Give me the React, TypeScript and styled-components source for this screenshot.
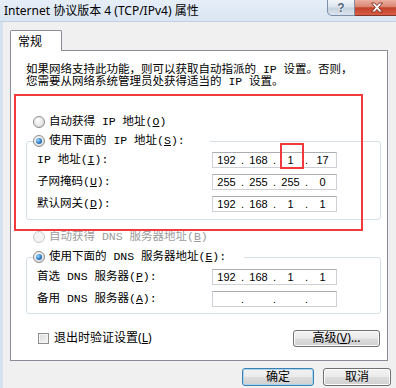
import React from "react";
import styled, { createGlobalStyle } from "styled-components";

const GlobalStyle = createGlobalStyle`
  html, body {
    margin: 0;
    padding: 0;
    background: #f0f0f0;
  }
  body {
    font-family: "Noto Sans", "Noto Sans CJK SC", sans-serif;
    color: #000;
  }
`;

const SIMSUN = `"Liberation Mono", "Noto Sans CJK SC", monospace`;
const YAHEI = `"Noto Sans", "Noto Sans CJK SC", sans-serif`;

const Window = styled.div`
  width: 396px;
  height: 388px;
  overflow: hidden;
  display: flex;
  flex-direction: column;
  background: #f0f0f0;
`;

const TitleBar = styled.div`
  height: 22px;
  flex: none;
  display: flex;
  align-items: flex-start;
  box-sizing: border-box;
  background: linear-gradient(#e6eef8, #d9e5f2);
  border-bottom: 1px solid #c3d1e2;
`;

const Title = styled.div`
  flex: 1;
  min-width: 0;
  padding-left: 4px;
  font: 12px/22px ${YAHEI};
  white-space: nowrap;
`;

const CaptionButtons = styled.div`
  display: flex;
  flex: none;
  margin-right: -4px;
`;

const HelpButton = styled.div`
  width: 28px;
  height: 16px;
  box-sizing: border-box;
  border: 1px solid #7d8fa6;
  border-top: none;
  border-radius: 0 0 0 5px;
  background: linear-gradient(#f1f5fa, #dae3ed 48%, #c6d2e0 52%, #dbe4ee);
  display: flex;
  align-items: center;
  justify-content: center;
  font: bold 12px/1 "Liberation Sans", sans-serif;
  color: #55687f;
  text-shadow: 0 0 2px #fff;
`;

const CloseButton = styled.div`
  width: 45px;
  height: 16px;
  box-sizing: border-box;
  border: 1px solid #80362a;
  border-top: none;
  border-left: none;
  background: linear-gradient(#eab0a2, #d98670 45%, #c3422c 52%, #d85d44);
  display: flex;
  align-items: center;
  justify-content: center;
`;

const Body = styled.div`
  flex: 1;
  display: flex;
  flex-direction: column;
  border-left: 3px solid #d5e1ef;
  padding: 8px 0 0 7px;
`;

const TabStrip = styled.div`
  display: flex;
`;

const Tab = styled.div`
  position: relative;
  z-index: 1;
  width: 52px;
  height: 21px;
  box-sizing: border-box;
  margin-bottom: -1px;
  padding-left: 7px;
  border: 1px solid #898c95;
  border-bottom: none;
  border-radius: 2px 2px 0 0;
  background: #fff;
  font: 12px/21px ${YAHEI};
`;

const Panel = styled.div`
  position: relative;
  width: 378px;
  height: 311px;
  box-sizing: border-box;
  border: 1px solid #898c95;
  background: #fff;
  padding: 13px 7px 0 15px;
  display: flex;
  flex-direction: column;
`;

const Intro = styled.p`
  margin: 0;
  font: 11.5px/12px ${SIMSUN};
  white-space: nowrap;
`;

const OptionRow = styled.div<{ $top: number }>`
  display: flex;
  align-items: center;
  gap: 4px;
  height: 16px;
  margin: ${(p) => p.$top}px 0 0 7px;
`;

const Radio = styled.span<{ $checked?: boolean; $disabled?: boolean }>`
  width: 12px;
  height: 12px;
  flex: none;
  box-sizing: border-box;
  border-radius: 50%;
  border: 1px solid ${(p) => (p.$disabled ? "#c9c9c9" : "#8b8b8b")};
  background: ${(p) =>
    p.$disabled
      ? "#f4f4f4"
      : "radial-gradient(circle at 40% 35%, #ffffff, #e4e4e4 60%, #cfcfcf)"};
  display: flex;
  align-items: center;
  justify-content: center;

  &::after {
    content: "";
    display: ${(p) => (p.$checked ? "block" : "none")};
    width: 6px;
    height: 6px;
    border-radius: 50%;
    background: radial-gradient(circle at 35% 35%, #9bd9ff, #2d7bc4 55%, #154e8c);
  }
`;

const OptionText = styled.span<{ $disabled?: boolean }>`
  font: 11.5px/16px ${SIMSUN};
  white-space: nowrap;
  color: ${(p) => (p.$disabled ? "#9c9c9c" : "#000")};
`;

const GroupBox = styled.fieldset<{ $top: number; $bottom: number }>`
  margin: ${(p) => p.$top}px 0 0 0;
  width: 355px;
  min-inline-size: 0;
  box-sizing: border-box;
  border: 1px solid #d5dfe5;
  border-radius: 3px;
  padding: 0 43px ${(p) => p.$bottom}px 6px;
`;

const GroupLegend = styled.legend<{ $gap: number }>`
  padding: 0 ${(p) => p.$gap}px 0 0;
  height: 16px;
  display: flex;
  align-items: center;
  gap: 4px;
`;

const FieldRow = styled.div<{ $first?: boolean }>`
  display: flex;
  align-items: center;
  justify-content: space-between;
  height: 22px;
  padding-left: 4px;
`;

const FieldLabel = styled.span`
  font: 11.5px/16px ${SIMSUN};
  white-space: nowrap;
`;

const IpBox = styled.div`
  width: 125px;
  height: 16px;
  box-sizing: border-box;
  border: 1px solid #cdd1d7;
  border-top-color: #abadb3;
  background: #fff;
  display: grid;
  grid-template-columns: 1fr 5px 1fr 5px 1fr 5px 1fr;
  align-items: center;
  font: 11px/14px "Liberation Sans", sans-serif;
`;

const Octet = styled.span`
  text-align: center;
`;

const Dot = styled.span`
  text-align: center;
`;

const BottomRow = styled.div`
  display: flex;
  align-items: center;
  justify-content: space-between;
  height: 18px;
  margin-top: 15px;
`;

const CheckOption = styled.label`
  display: flex;
  align-items: center;
  gap: 5px;
  margin-left: 12px;
`;

const CheckBox = styled.span`
  width: 11px;
  height: 11px;
  box-sizing: border-box;
  border: 1px solid #8f8f8f;
  background: linear-gradient(135deg, #dcdcdc, #f6f6f6);
  box-shadow: inset 0 0 0 1px #f4f4f4;
`;

const CheckText = styled.span`
  font: 12px/16px ${YAHEI};
  white-space: nowrap;
`;

const PushButton = styled.button<{ $width: number; $default?: boolean }>`
  width: ${(p) => p.$width}px;
  height: ${(p) => (p.$default !== undefined ? 18 : 17)}px;
  box-sizing: border-box;
  padding: 0;
  border: 1px solid ${(p) => (p.$default ? "#3c7fb1" : "#707070")};
  border-radius: 3px;
  background: linear-gradient(#f2f2f2, #ebebeb 48%, #dddddd 52%, #cfcfcf);
  box-shadow: inset 0 0 0 1px ${(p) => (p.$default ? "#a6d6f2" : "#fcfcfc")};
  font: 12px/14px ${YAHEI};
  color: #000;
`;

const Footer = styled.div`
  display: flex;
  justify-content: flex-end;
  gap: 9px;
  margin-top: 7px;
  padding-right: 5px;
`;

const Highlight = styled.div<{ $w: number }>`
  position: absolute;
  box-sizing: border-box;
  border: ${(p) => p.$w}px solid #f2393b;
  pointer-events: none;
`;

const Key = ({ k }: { k: string }) => (
  <>
    (<u>{k}</u>)
  </>
);

const IpField = ({ parts }: { parts: string[] }) => (
  <IpBox>
    {parts.map((part, i) => (
      <React.Fragment key={i}>
        {i > 0 && <Dot>.</Dot>}
        <Octet>{part}</Octet>
      </React.Fragment>
    ))}
  </IpBox>
);

const CloseGlyph = () => (
  <svg width="14" height="11" viewBox="0 0 14 11">
    <path
      d="M1.5 1h3.2L7 3.6 9.3 1h3.2L8.7 5.5l3.8 4.5H9.3L7 7.4 4.7 10H1.5l3.8-4.5z"
      fill="#fff"
      stroke="#7a2a1e"
      strokeWidth="0.9"
      strokeLinejoin="round"
    />
  </svg>
);

const App = () => {
  return (
    <Window>
      <GlobalStyle />
      <TitleBar>
        <Title>Internet 协议版本 4 (TCP/IPv4) 属性</Title>
        <CaptionButtons>
          <HelpButton>?</HelpButton>
          <CloseButton>
            <CloseGlyph />
          </CloseButton>
        </CaptionButtons>
      </TitleBar>
      <Body>
        <TabStrip>
          <Tab>常规</Tab>
        </TabStrip>
        <Panel>
          <Intro>
            如果网络支持此功能，则可以获取自动指派的 IP 设置。否则，
            <br />
            您需要从网络系统管理员处获得适当的 IP 设置。
          </Intro>

          <OptionRow $top={26}>
            <Radio />
            <OptionText>
              自动获得 IP 地址<Key k="O" />
            </OptionText>
          </OptionRow>

          <GroupBox $top={3} $bottom={4}>
            <GroupLegend $gap={25}>
              <Radio $checked />
              <OptionText>
                使用下面的 IP 地址<Key k="S" />:
              </OptionText>
            </GroupLegend>
            <FieldRow>
              <FieldLabel>
                IP 地址<Key k="I" />:
              </FieldLabel>
              <IpField parts={["192", "168", "1", "17"]} />
            </FieldRow>
            <FieldRow>
              <FieldLabel>
                子网掩码<Key k="U" />:
              </FieldLabel>
              <IpField parts={["255", "255", "255", "0"]} />
            </FieldRow>
            <FieldRow>
              <FieldLabel>
                默认网关<Key k="D" />:
              </FieldLabel>
              <IpField parts={["192", "168", "1", "1"]} />
            </FieldRow>
          </GroupBox>

          <OptionRow $top={9}>
            <Radio $disabled />
            <OptionText $disabled>
              自动获得 DNS 服务器地址<Key k="B" />
            </OptionText>
          </OptionRow>

          <GroupBox $top={4} $bottom={3}>
            <GroupLegend $gap={18}>
              <Radio $checked />
              <OptionText>
                使用下面的 DNS 服务器地址<Key k="E" />:
              </OptionText>
            </GroupLegend>
            <FieldRow style={{ marginTop: 1 }}>
              <FieldLabel>
                首选 DNS 服务器<Key k="P" />:
              </FieldLabel>
              <IpField parts={["192", "168", "1", "1"]} />
            </FieldRow>
            <FieldRow>
              <FieldLabel>
                备用 DNS 服务器<Key k="A" />:
              </FieldLabel>
              <IpField parts={["", "", "", ""]} />
            </FieldRow>
          </GroupBox>

          <BottomRow>
            <CheckOption>
              <CheckBox />
              <CheckText>
                退出时验证设置<Key k="L" />
              </CheckText>
            </CheckOption>
            <PushButton $width={87}>
              高级<Key k="V" />...
            </PushButton>
          </BottomRow>

          <Highlight $w={2} style={{ left: 3, top: 43, width: 349, height: 137 }} />
          <Highlight $w={2} style={{ left: 269, top: 92, width: 24, height: 26 }} />
        </Panel>
        <Footer>
          <PushButton $width={72} $default>
            确定
          </PushButton>
          <PushButton $width={68} $default={false}>
            取消
          </PushButton>
        </Footer>
      </Body>
    </Window>
  );
};

export default App;
